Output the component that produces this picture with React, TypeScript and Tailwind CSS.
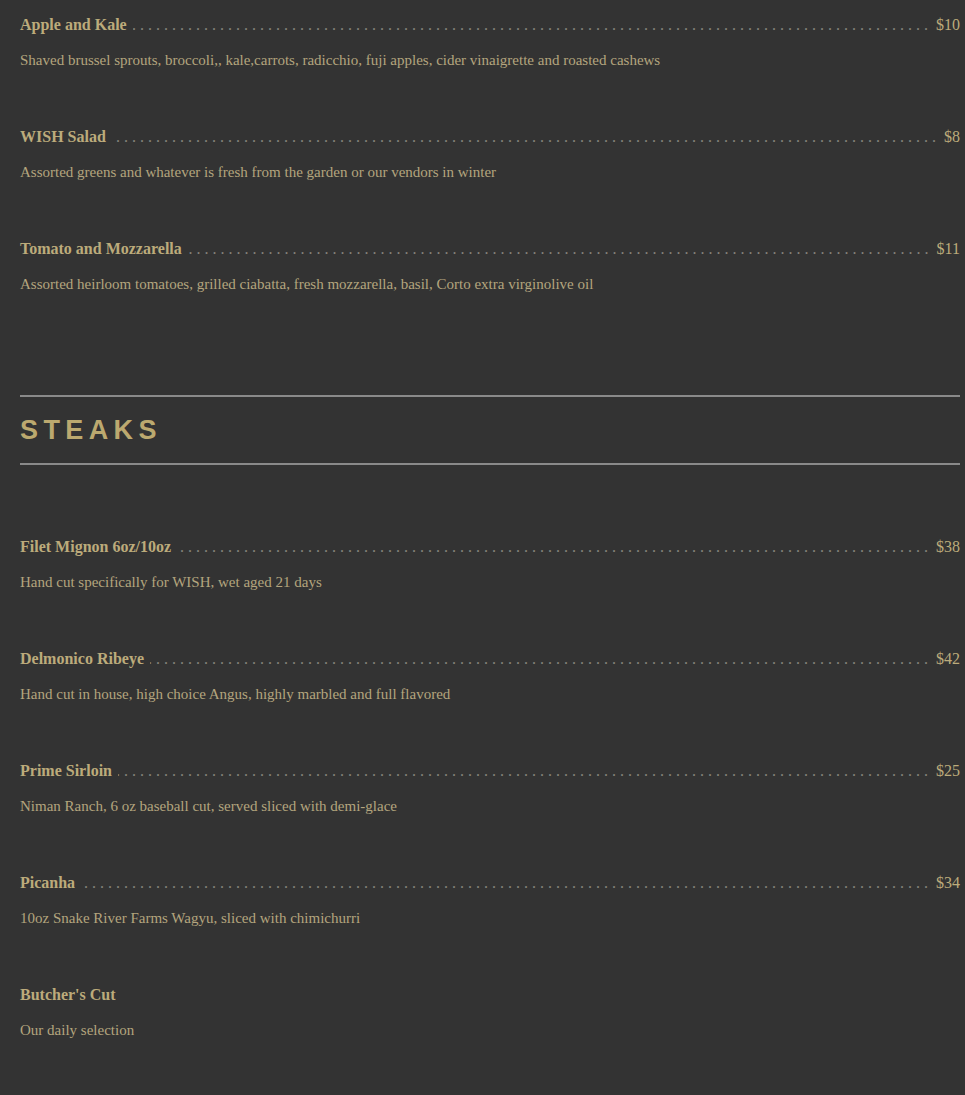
import React from 'react';

type Item = { name: string; price?: string; desc: string };

const salads: Item[] = [
  { name: 'Apple and Kale', price: '$10', desc: 'Shaved brussel sprouts, broccoli,, kale,carrots, radicchio, fuji apples, cider vinaigrette and roasted cashews' },
  { name: 'WISH Salad', price: '$8', desc: 'Assorted greens and whatever is fresh from the garden or our vendors in winter' },
  { name: 'Tomato and Mozzarella', price: '$11', desc: 'Assorted heirloom tomatoes, grilled ciabatta, fresh mozzarella, basil, Corto extra virginolive oil' },
];

const steaks: Item[] = [
  { name: 'Filet Mignon 6oz/10oz', price: '$38', desc: 'Hand cut specifically for WISH, wet aged 21 days' },
  { name: 'Delmonico Ribeye', price: '$42', desc: 'Hand cut in house, high choice Angus, highly marbled and full flavored' },
  { name: 'Prime Sirloin', price: '$25', desc: 'Niman Ranch, 6 oz baseball cut, served sliced with demi-glace' },
  { name: 'Picanha', price: '$34', desc: '10oz Snake River Farms Wagyu, sliced with chimichurri' },
  { name: "Butcher's Cut", desc: 'Our daily selection' },
];

const DOTS = Array(140).fill('.').join(' ');

const MenuItem: React.FC<{ item: Item }> = ({ item }) => (
  <div className="h-[112px] pt-[13px]">
    <div className="flex items-baseline h-6 leading-6">
      <span className="text-[16px] font-bold text-[#bcab7b] whitespace-nowrap">{item.name}</span>
      {item.price && (
        <>
          <div className="flex-1 flex justify-end overflow-hidden ml-1.5 mr-2">
            <span className="whitespace-nowrap text-[16px] text-[#85847c]">{DOTS}</span>
          </div>
          <span className="text-[16px] text-[#bcab7b]">{item.price}</span>
        </>
      )}
    </div>
    <p className="mt-[11px] h-6 leading-6 text-[15px] text-[#b3a57e]">{item.desc}</p>
  </div>
);

export default function App() {
  return (
    <div className="min-h-[1095px] bg-[#333333] pl-5 pr-[5px]" style={{ fontFamily: '"Liberation Serif", serif' }}>
      {salads.map((s) => (
        <MenuItem key={s.name} item={s} />
      ))}
      <div className="mt-[59px] border-t-2 border-b-2 border-[#8a8a8a] h-[70px] flex items-center">
        <h2
          className="text-[27px] font-bold tracking-[0.2em] text-[#bca96f] leading-9"
          style={{ fontFamily: '"Liberation Sans", sans-serif' }}
        >
          STEAKS
        </h2>
      </div>
      <div className="pt-[57px]">
        {steaks.map((s) => (
          <MenuItem key={s.name} item={s} />
        ))}
      </div>
    </div>
  );
}
